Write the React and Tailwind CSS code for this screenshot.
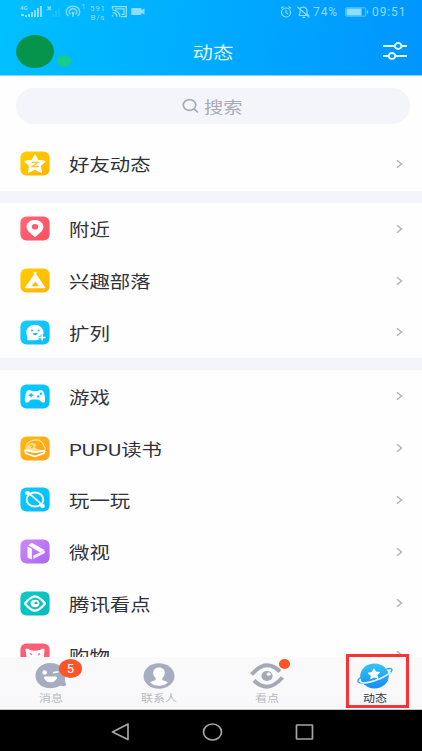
import React from "react";

const CJK = "font-['Noto_Sans_CJK_SC',sans-serif]";

function Tile({ id, from, to, children }) {
  return (
    <svg viewBox="0 0 30 25" className="h-[25px] w-[30px] shrink-0" preserveAspectRatio="none">
      <defs>
        <linearGradient id={id} x1="0" y1="0" x2="1" y2="1">
          <stop offset="0" stopColor={from} />
          <stop offset="1" stopColor={to} />
        </linearGradient>
      </defs>
      <rect x="0.4" y="0.4" width="29.2" height="24.2" rx="6" fill={`url(#${id})`} />
      {children}
    </svg>
  );
}

const StarIcon = () => (
  <Tile id="star" from="#ffd000" to="#ffb400">
    <path d="M15 4.300l3 5.200 6.900.9-4.700 4.200 1.100 6.400-6.300-2.800L8.700 21l1.100-6.400-4.700-4.200 6.900-.9z" fill="#fff" stroke="#fff" strokeWidth="1.400" strokeLinejoin="round" />
    <path d="M11.500 11.300h6.500l-6 4.300h7" stroke="#fcc41a" strokeWidth="1.200" fill="none" />
  </Tile>
);

const PinIcon = () => (
  <Tile id="pin" from="#ff6878" to="#fa505f">
    <path d="M15 21.200c-3-2.800-8.400-6-8.400-10.200C6.600 6.700 10.400 4 15 4s8.400 2.700 8.400 7c0 4.200-5.400 7.400-8.400 10.200z" fill="#fff" />
    <ellipse cx="15" cy="10.800" rx="3.300" ry="2.800" fill="#fa6170" />
  </Tile>
);

const TentIcon = () => (
  <Tile id="tent" from="#ffcf00" to="#ffb300">
    <path d="M14 4.500l1.200 1.600 1.200-1.600M15.200 6C13 9.500 9 15 5.800 19.600h18.800C21.400 15 17.400 9.500 15.200 6z" fill="#fff" stroke="#fff" strokeWidth="1.500" strokeLinejoin="round" />
    <path d="M15.200 13.500l3.900 4.800h-7.800z" fill="#ffbd05" />
  </Tile>
);

const FaceIcon = () => (
  <Tile id="face" from="#14cdff" to="#0abdf7">
    <path d="M6.300 12.300C6.300 8 10.300 4.700 15 4.700s8.500 3.500 8.500 7.500c0 5.200-4 8-8.500 8H8.500c-1.200 0-1.600-.8-1.100-1.800.3-.7 0-1.700-.4-2.700-.5-1.100-.7-2.200-.7-3.400z" fill="#fff" />
    <ellipse cx="12" cy="10.500" rx="1.100" ry=".9" fill="#15c4fa" />
    <ellipse cx="18.600" cy="10.500" rx="1.100" ry=".9" fill="#15c4fa" />
    <path d="M12.900 13h4.800c0 2.900-4.800 2.900-4.800 0z" fill="#15c4fa" />
    <path d="M22.100 14.600v6M18.700 17.500h7" stroke="#12c4fa" strokeWidth="3.200" />
    <path d="M22.100 14.500v6M18.600 17.500h7" stroke="#fff" strokeWidth="1.700" />
  </Tile>
);

const GameIcon = () => (
  <Tile id="game" from="#08ccff" to="#06bdf8">
    <path d="M9 6c2 0 2.700 1.200 4 1.200h4C18.300 7.200 19 6 21 6c3.300 0 4.300 7.500 4.100 10.800-.1 2.400-2.700 2.500-4.100.8-1-1.300-2-2-3.500-2h-5c-1.500 0-2.500.7-3.500 2-1.400 1.700-4 1.600-4.100-.8C4.700 13.500 5.700 6 9 6z" fill="#fff" />
    <path d="M11 9.300v4M8.700 11.300h4.600" stroke="#08c2fa" strokeWidth="1.500" />
    <circle cx="20.800" cy="9.700" r="1.200" fill="#08c2fa" />
    <circle cx="18.200" cy="12.400" r="1.200" fill="#08c2fa" />
  </Tile>
);

const BookIcon = () => (
  <Tile id="book" from="#ffb814" to="#ffa21b">
    <path d="M5.500 11.500C6.500 6.500 11.500 3.800 16.500 3.800c5 0 6.500 3.500 7.500 6.200.5 1.300 1.500 2 1.500 3.500" fill="none" stroke="#ffe6a5" strokeWidth="1.200" />
    <path d="M5.500 14c.5-4.500 4-7 8-6.800 3.300.2 3.600 3.300 1 4 1.500 2 5 2.800 10 2.800l-9 3z" fill="#ffdf95" />
    <path d="M9.500 9.700c1.500-.8 3-.5 3.300.5.200 1-1 1.500-2 1.200" fill="none" stroke="#ffac17" strokeWidth="1.200" />
    <path d="M4.500 14.200l10.500 2 10-1.500M5 15.300l1 2.200 9 3 9-3.300 1-2.500" fill="none" stroke="#fff" strokeWidth="1.800" strokeLinejoin="round" />
  </Tile>
);

const PlayIcon = () => (
  <Tile id="play" from="#08ccff" to="#08b9fa">
    <ellipse cx="15" cy="12.500" rx="8.300" ry="7" fill="none" stroke="#fff" strokeWidth="1.800" />
    <path d="M7 5.500c3 1.500 13.500 10 16 14" fill="none" stroke="#fff" strokeWidth="1.800" />
    <ellipse cx="7.500" cy="5.900" rx="2.400" ry="2" fill="#fff" />
    <ellipse cx="22.500" cy="19.100" rx="2.400" ry="2" fill="#fff" />
  </Tile>
);

const VideoIcon = () => (
  <Tile id="video" from="#d28af8" to="#a668f1">
    <path d="M7.500 7.500l4.300 2.300v10.600L8.400 19c-.6-.3-.9-.7-.9-1.300z" fill="#fff" />
    <path d="M8.300 6.200l2.300-1.700c.8-.5 1.700-.5 2.500 0l11.400 6.500-4.300 2.500z" fill="#fff" />
    <path d="M13.300 16.400l10.900-5c1.400 1 1.100 2.400-.3 3.200l-10.600 5.500z" fill="#f6eaff" />
  </Tile>
);

const EyeIcon = () => (
  <Tile id="eye" from="#08ccc9" to="#08b9bd">
    <path d="M5 12.500c4-5 7-7.200 10-7.200s6 2.200 10 7.200c-4 5-7 7.200-10 7.200s-6-2.200-10-7.200z" fill="none" stroke="#fff" strokeWidth="2.200" strokeLinejoin="round" />
    <ellipse cx="15" cy="12.500" rx="4.400" ry="3.700" fill="#fff" />
    <ellipse cx="16" cy="12" rx="1.600" ry="1.300" fill="#0abfc0" />
  </Tile>
);

const ShopIcon = () => (
  <Tile id="shop" from="#f96075" to="#f96075">
    <path d="M5.500 6.200c1.500-.8 3.500 0 4.500.8 3 1 7 1 10 0 1-.8 3-1.600 4.500-.8l-.5 7L25 21H5l1.500-7.500z" fill="#fff" />
    <path d="M10 10.500l2 1.300M20 10.500l-2 1.300" stroke="#f96075" strokeWidth="1.300" />
  </Tile>
);

const groups = [
  [["好友动态", StarIcon]],
  [["附近", PinIcon], ["兴趣部落", TentIcon], ["扩列", FaceIcon]],
  [["游戏", GameIcon], ["PUPU读书", BookIcon], ["玩一玩", PlayIcon], ["微视", VideoIcon], ["腾讯看点", EyeIcon], ["购物", ShopIcon]],
];

function Row({ label, Icon }) {
  return (
    <div className="flex h-[51.800px] shrink-0 items-center pl-5 pr-[18px]">
      <Icon />
      <span className="ml-[19px] origin-left scale-x-[1.2] whitespace-nowrap pt-1 font-['Roboto','Noto_Sans_CJK_SC',sans-serif] text-[17px] leading-none text-[#303239]">{label}</span>
      <svg viewBox="0 0 8 10" className="ml-auto h-[10px] w-2" fill="none" stroke="#b4b4b6" strokeWidth="1.500">
        <path d="M1 1.200l4.500 3.800L1 8.800" />
      </svg>
    </div>
  );
}

function StatusBar() {
  return (
    <div className="flex h-[23px] items-center pl-5 pr-4 font-['Roboto',sans-serif] text-[#8edcff]">
      <svg viewBox="0 0 130 20" className="h-5 w-[130px]" fill="currentColor">
        <text x="0" y="8" fontSize="6" fontWeight="700">4G</text>
        <path d="M1 12h3v2H1zM5 13h2v2H5zM8 12h2v3H8zM11 10h2v5h-2zM14 8h2v7h-2zM17 6h2v9h-2zM20 4h2v11h-2z" />
        <path d="M27.500 4.500l3.500 3.500M31 4.500L27.500 8" stroke="currentColor" strokeWidth="1.300" />
        <path d="M32 12h2v3h-2zM35 9h2v6h-2zM38 6h2v9h-2z" opacity=".2" />
        <g fill="none" stroke="currentColor" strokeWidth="1.300">
          <path d="M48.500 14a6.800 5.700 0 1 1 9 0M50.500 12.300a3.800 3.200 0 1 1 5 0" />
        </g>
        <ellipse cx="53" cy="11" rx="1.300" ry="1.300" />
        <path d="M52.300 11h1.400v4h-1.400z" />
        <text x="61.500" y="6.500" fontSize="7">1</text>
        <text x="70" y="8.700" fontSize="8" textLength="15">591</text>
        <text x="70.500" y="17.500" fontSize="8" textLength="14">B/s</text>
        <g fill="none" stroke="currentColor" strokeWidth="1.300">
          <path d="M92.500 7V4.600h13.800v10H101M92.500 13v1.600M92.500 10.700a4 4 0 0 1 4.500 4M92.500 8.200a7 6.500 0 0 1 7.500 6.500M95 6.800h9v5.500h-2.500" />
        </g>
        <path d="M112 6h8.500q1 0 1 1v1l3-1.500v6l-3-1.500v1q0 1-1 1H112q-.8 0-.8-1V7q0-1 .8-1z" />
      </svg>
      <svg viewBox="0 0 32 14" className="ml-auto h-[14px] w-8" fill="none" stroke="currentColor" strokeWidth="1.200">
        <ellipse cx="5" cy="7.500" rx="4.500" ry="4.500" />
        <path d="M5 4.700v3l2 1.300M0 3.200L2.500 1.500M10 3.200L7.500 1.500" />
        <path d="M18 10.500h9.500L26 8.500V6c0-4-5-5-7-2.600M18 10.500l1-2V5.500M16.500 2l12 10.500M21.500 12.300H24" />
      </svg>
      <span className="w-[29px] whitespace-nowrap text-[12px] leading-none tracking-[0.900px]">74%</span>
      <svg viewBox="0 0 24 10" className="ml-[3px] h-[10px] w-6">
        <rect x=".6" y=".8" width="20" height="8.400" rx="1" fill="none" stroke="currentColor" strokeWidth="1" opacity=".65" />
        <rect x="1.500" y="1.500" width="15" height="7" fill="currentColor" />
        <path d="M22.500 3.500v3" stroke="currentColor" strokeWidth="1.300" />
      </svg>
      <span className="ml-[3px] w-[34px] whitespace-nowrap text-[12px] leading-none tracking-[0.900px]">09:51</span>
    </div>
  );
}

function Header() {
  return (
    <header className="h-[76px] shrink-0 border-b border-[#8ad4ff] bg-linear-100 from-[#00c0ff] to-[#0095ff]">
      <StatusBar />
      <div className="flex h-14 items-center px-4">
        <div className="flex w-[100px] items-end">
          <div className="h-[33px] w-[38px] rounded-[50%] bg-[#06934c]" />
          <div className="ml-[3px] h-3 w-[14px] -translate-y-px rounded-[50%] bg-[#17cc8b]" />
        </div>
        <h1 className="flex-1 text-center text-[17px] leading-none text-[#dcf7ff]">
          <span className="inline-block translate-x-[2px] scale-x-[1.2]">动态</span>
        </h1>
        <div className="flex w-[100px] justify-end">
          <svg viewBox="0 0 24 20" className="mr-[-1px] h-5 w-6" fill="none" stroke="#e2f6ff" strokeWidth="2">
            <path d="M0 5h12M18 5h6M0 15h6M12 15h12" />
            <ellipse cx="15.200" cy="5" rx="3.300" ry="3" />
            <ellipse cx="9" cy="15" rx="3.300" ry="3" />
          </svg>
        </div>
      </div>
    </header>
  );
}

const ChatTab = () => (
  <svg viewBox="0 0 32 26" className="h-[26px] w-8">
    <path d="M15.500 0C24 0 30 5.500 30 12.300c0 3.200-.3 5.700.8 8.200.5 1.500 0 2.600-1.800 2.700l-4-.4c-2.500 1.600-6 2.500-9.500 2.500C6.500 25.300.5 19.500.5 12.700S6.500 0 15.500 0z" fill="#a7adc0" />
    <ellipse cx="9.700" cy="9.500" rx="2.300" ry="2.200" fill="#fff" />
    <path d="M18 9.800l5.500-1" stroke="#fff" strokeWidth="1.500" />
    <path d="M9.500 14h12c0 6.500-12 6.500-12 0z" fill="#fff" stroke="#fff" strokeWidth="1" strokeLinejoin="round" />
  </svg>
);

const ContactTab = () => (
  <svg viewBox="0 0 32 26" className="h-[26px] w-8">
    <ellipse cx="16" cy="13" rx="15.500" ry="12.800" fill="#a7adc0" />
    <path d="M16 4.500c3.700 0 5.800 2.300 5.800 5.300 0 2.200-1 4-2.500 5.200v1.500c0 1 3.500 1.500 5.600 2.700-1.900 2.300-5 3.600-8.900 3.600s-7-1.300-8.900-3.600c2.100-1.200 5.600-1.700 5.600-2.700V15c-1.500-1.200-2.500-3-2.500-5.200 0-3 2.100-5.300 5.800-5.300z" fill="#fff" />
  </svg>
);

const WatchTab = () => (
  <svg viewBox="0 0 34 26" className="h-[26px] w-[34px]">
    <path d="M1.500 11.500C8 4.500 12.500 2.300 17 2.300S26 4.500 30 8.500M32.500 14.500C26 21.500 21.500 23.700 17 23.700S8 21.500 4 17.500" fill="none" stroke="#a5a8b6" strokeWidth="4" />
    <ellipse cx="17" cy="13" rx="5.600" ry="4.900" fill="#a5a8b6" />
    <ellipse cx="18.800" cy="11.200" rx="2" ry="1.600" fill="#fff" />
  </svg>
);

const PlanetTab = () => (
  <svg viewBox="0 0 36 26" className="h-[26px] w-9">
    <defs>
      <linearGradient id="planet" x1="0" y1="0" x2="0" y2="1">
        <stop offset="0" stopColor="#35c4fb" />
        <stop offset="1" stopColor="#188cf5" />
      </linearGradient>
    </defs>
    <ellipse cx="17.500" cy="13" rx="14.300" ry="12.500" fill="url(#planet)" />
    <path d="M5.500 13.600C1.500 15.500.300 17.700 1.400 19c2.300 2.500 12.500.6 21.300-3.200C31.500 12 36 8.100 34.700 6.300c-.6-.9-2.600-1-5.200-.4" fill="none" stroke="#35a8f4" strokeWidth="1.500" />
    <path d="M3.500 19.600c4 .9 11.800-.7 19.200-3.800 5.300-2.300 9.300-4.900 11-7" fill="none" stroke="#dff5ff" strokeWidth="1.500" />
    <path d="M17 5.700l1.700 3.300 4.100.3-2.800 2.600.9 3.300-3.900-1.200-3.200 1.900.3-3.400-3.100-2.300 4.100-1z" fill="#fff" stroke="#fff" strokeWidth=".8" strokeLinejoin="round" />
  </svg>
);

function Tab({ label, active, children }) {
  return (
    <div className="flex w-[108px] shrink-0 flex-col items-center pt-[6px]">
      <div className="relative">{children}</div>
      <span className={`mt-1 scale-x-[1.2] text-[10px] leading-none ${active ? "text-[#30343d]" : "text-[#b7b9c2]"}`}>{label}</span>
    </div>
  );
}

export default function App() {
  return (
    <div className={`flex h-[751px] w-[422px] flex-col overflow-hidden bg-[#fefefe] ${CJK}`}>
      <Header />
      <main className="flex h-[581px] shrink-0 flex-col overflow-hidden">
        <div className="mb-[14px] ml-4 mr-3 mt-3 flex h-9 shrink-0 items-center justify-center rounded-full bg-[#f3f5fa] text-[#a8abb3]">
          <svg viewBox="0 0 18 16" className="h-4 w-[18px]" fill="none" stroke="currentColor" strokeWidth="1.700">
            <ellipse cx="7.500" cy="7" rx="6.200" ry="5.400" />
            <path d="M12.200 11l3.800 3.300" />
          </svg>
          <span className="ml-1 mr-[7px] origin-left scale-x-[1.200] text-[16px] leading-none">搜索</span>
        </div>
        {groups.map((group, index) => (
          <section key={index} className={index ? "border-t-[12px] border-[#f4f5fa]" : "pb-[1.200px]"}>
            {group.map(([label, Icon]) => (
              <Row key={label} label={label} Icon={Icon} />
            ))}
          </section>
        ))}
      </main>
      <nav className="flex h-[53px] shrink-0 border-b border-[#c5c5c5] bg-linear-to-b from-[#fafafb] to-[#f8f8fa]">
        <div className="-ml-[3px] flex">
          <Tab label="消息">
            <ChatTab />
            <span className="absolute -top-[4px] left-[24px] flex h-[19px] w-[23px] items-center justify-center rounded-[50%] bg-[#fb5528] font-['Roboto',sans-serif] text-[13px] leading-none text-white">5</span>
          </Tab>
          <Tab label="联系人">
            <ContactTab />
          </Tab>
          <Tab label="看点">
            <WatchTab />
            <span className="absolute -top-[4px] left-[29px] h-[10px] w-[11px] rounded-[50%] bg-[#fb5528]" />
          </Tab>
          <Tab label="动态" active>
            <PlanetTab />
            <span className="absolute -left-[11px] -top-[9px] h-[54px] w-[63px] border-[3px] border-[#fa3236]" />
          </Tab>
        </div>
      </nav>
      <footer className="flex h-[41px] shrink-0 items-center bg-black pl-[111px] text-[#a5a5a5]">
        <svg viewBox="0 0 204 20" className="h-5 w-[204px]" fill="none" stroke="currentColor" strokeWidth="1.700">
          <path d="M1.500 11L17 3v15.500z" strokeLinejoin="round" />
          <ellipse cx="101.500" cy="11" rx="9" ry="8" />
          <rect x="185.500" y="4" width="16" height="14" rx=".5" />
        </svg>
      </footer>
    </div>
  );
}
